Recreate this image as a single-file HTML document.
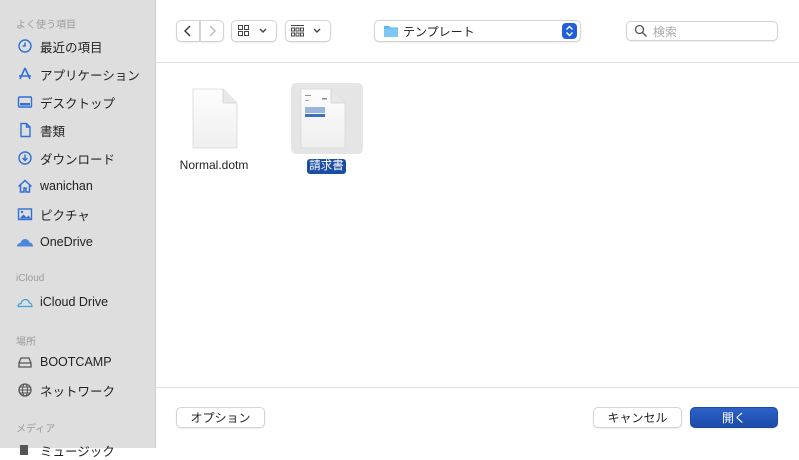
<!DOCTYPE html>
<html><head><meta charset="utf-8"><style>
*{margin:0;padding:0;box-sizing:border-box}
body{width:799px;height:448px;overflow:hidden;background:#fff;font-family:"Liberation Sans","Noto Sans CJK JP",sans-serif;position:relative}
.sb{position:absolute;left:0;top:0;width:156px;height:448px;background:#dedede;border-right:1px solid #cfcfcf}
.h{position:absolute;left:16px;font-size:10px;color:#9a9a9a}
.it{position:absolute;left:16px;font-size:12.5px;color:#222;display:flex;align-items:center;height:20px}
.it svg{width:18px;height:18px;margin-right:6px;flex:none}
.btn{position:absolute;background:#fff;border:1px solid #d4d4d4;border-radius:5px;box-shadow:0 0.5px 1px rgba(0,0,0,.12);font-size:12px;color:#222;display:flex;align-items:center;justify-content:center}
.line{position:absolute;left:156px;right:0;height:1px;background:#e3e3e3}
</style></head><body>
<div class="sb">
<div class="h" style="top:16px">よく使う項目</div>
<div class="it" style="top:36px"><svg viewBox="0 0 18 18"><circle cx="9" cy="9" r="6" fill="none" stroke="#2f6fd6" stroke-width="1.4"/><path d="M9 5.5V9H6.5" fill="none" stroke="#2f6fd6" stroke-width="1.4"/></svg>最近の項目</div>
<div class="it" style="top:64px"><svg viewBox="0 0 18 18"><path d="M9 3L4 14M9 3l5 11M3 11h12" fill="none" stroke="#2f6fd6" stroke-width="1.6"/></svg>アプリケーション</div>
<div class="it" style="top:92px"><svg viewBox="0 0 18 18"><rect x="2.5" y="4" width="13" height="10" rx="1" fill="none" stroke="#2f6fd6" stroke-width="1.4"/><rect x="4" y="10" width="10" height="2.5" fill="#2f6fd6"/></svg>デスクトップ</div>
<div class="it" style="top:120px"><svg viewBox="0 0 18 18"><path d="M5 2.5h5.5L14 6v9.5H5z M10.5 2.5V6H14" fill="none" stroke="#2f6fd6" stroke-width="1.4"/></svg>書類</div>
<div class="it" style="top:148px"><svg viewBox="0 0 18 18"><circle cx="9" cy="9" r="6" fill="none" stroke="#2f6fd6" stroke-width="1.4"/><path d="M9 5.5v6M6.5 9l2.5 2.5 2.5-2.5" fill="none" stroke="#2f6fd6" stroke-width="1.4"/></svg>ダウンロード</div>
<div class="it" style="top:176px"><svg viewBox="0 0 18 18"><path d="M2.5 9.5L9 3.5l6.5 6M4.5 8v7h3.5v-4h2v4h3.5V8" fill="none" stroke="#2f6fd6" stroke-width="1.5"/></svg>wanichan</div>
<div class="it" style="top:204px"><svg viewBox="0 0 18 18"><rect x="2.5" y="4" width="13" height="10.5" fill="none" stroke="#2f6fd6" stroke-width="1.4"/><path d="M3.5 13.5l4-4 3 3 2-2 2.5 3z" fill="#2f6fd6"/><circle cx="6" cy="7" r="1.2" fill="#2f6fd6"/></svg>ピクチャ</div>
<div class="it" style="top:232px"><svg viewBox="0 0 18 18"><path d="M1 13.5c0-2.5 2-3.5 3.5-3.5.5-2.5 2.5-4 4.5-4s4 1.5 4.5 3.5c2 0 3.5 1.5 3.5 4z" fill="#4a86d9"/></svg>OneDrive</div>
<div class="h" style="top:273px">iCloud</div>
<div class="it" style="top:292px"><svg viewBox="0 0 18 18"><path d="M2 13.5c0-2 1.5-3 3-3 .5-2.5 2.5-4 4.5-4s3.5 1.5 4 3.5c1.5 0 2.5 1.5 2.5 3.5z" fill="none" stroke="#3fa0e0" stroke-width="1.3"/></svg>iCloud Drive</div>
<div class="h" style="top:333px">場所</div>
<div class="it" style="top:352px"><svg viewBox="0 0 18 18"><path d="M3 10l2-5h8l2 5v4H3zM3 10h12" fill="none" stroke="#555" stroke-width="1.3"/></svg>BOOTCAMP</div>
<div class="it" style="top:380px"><svg viewBox="0 0 18 18"><circle cx="9" cy="9" r="6" fill="none" stroke="#555" stroke-width="1.3"/><ellipse cx="9" cy="9" rx="2.5" ry="6" fill="none" stroke="#555" stroke-width="1"/><path d="M3 9h12M4 6h10M4 12h10" stroke="#555" stroke-width="1"/></svg>ネットワーク</div>
<div class="h" style="top:420px">メディア</div>
<div class="it" style="top:440px"><svg viewBox="0 0 18 18"><rect x="4" y="4" width="8" height="10" fill="#555"/></svg>ミュージック</div>
</div>

<div class="btn" style="left:176px;top:20px;width:24px;height:22px;border-radius:5px 0 0 5px"><svg width="10" height="12"><path d="M7 1L2 6l5 5" fill="none" stroke="#333" stroke-width="1.4"/></svg></div>
<div class="btn" style="left:200px;top:20px;width:24px;height:22px;border-radius:0 5px 5px 0"><svg width="10" height="12"><path d="M3 1l5 5-5 5" fill="none" stroke="#bbb" stroke-width="1.4"/></svg></div>
<div class="btn" style="left:231px;top:20px;width:46px;height:22px"><svg width="36" height="14"><g fill="none" stroke="#444" stroke-width="1"><rect x="2.5" y="1.5" width="4" height="4"/><rect x="8.5" y="1.5" width="4" height="4"/><rect x="2.5" y="7.5" width="4" height="4"/><rect x="8.5" y="7.5" width="4" height="4"/><path d="M24 5l3 3 3-3" stroke-width="1.4"/></g></svg></div>
<div class="btn" style="left:285px;top:20px;width:46px;height:22px"><svg width="36" height="14"><g fill="none" stroke="#444" stroke-width="1"><path d="M1 1.5h13"/><rect x="1.5" y="4" width="3" height="3"/><rect x="6" y="4" width="3" height="3"/><rect x="10.5" y="4" width="3" height="3"/><rect x="1.5" y="9" width="3" height="3"/><rect x="6" y="9" width="3" height="3"/><rect x="10.5" y="9" width="3" height="3"/><path d="M24 5l3 3 3-3" stroke-width="1.4"/></g></svg></div>
<div class="btn" style="left:374px;top:20px;width:207px;height:22px;justify-content:flex-start;padding-left:8px"><svg width="16" height="14" style="margin-right:4px"><path d="M1 2h5l1.5 1.5H15V13H1z" fill="#5db4ef"/><path d="M1 4.5h14V13H1z" fill="#7cc7f5"/></svg>テンプレート<div style="position:absolute;right:3px;top:2px;width:15px;height:16px;background:#2160d6;border-radius:4px"><svg width="15" height="16"><path d="M4.5 6.5l3-3 3 3M4.5 9.5l3 3 3-3" fill="none" stroke="#fff" stroke-width="1.4"/></svg></div></div>
<div class="btn" style="left:626px;top:21px;width:152px;height:20px;justify-content:flex-start;padding-left:7px;color:#aaa"><svg width="14" height="14" style="margin-right:5px"><circle cx="5.5" cy="5.5" r="4" fill="none" stroke="#555" stroke-width="1.3"/><path d="M8.5 8.5l4 4" stroke="#555" stroke-width="1.4"/></svg>検索</div>

<div class="line" style="top:62px"></div>

<svg style="position:absolute;left:190px;top:88px" width="50" height="64"><defs><linearGradient id="g" x1="0" y1="0" x2="0" y2="1"><stop offset="0" stop-color="#fdfdfd"/><stop offset="1" stop-color="#efefef"/></linearGradient></defs><path d="M3 1h30l14 14v45H3z" fill="url(#g)" stroke="#d8d8d8" stroke-width=".8"/><path d="M33 1v14h14" fill="#e8e8e8" stroke="#d0d0d0" stroke-width=".8"/></svg>
<div style="position:absolute;left:170px;top:158px;width:88px;text-align:center;font-size:12px;color:#222">Normal.dotm</div>

<div style="position:absolute;left:291px;top:83px;width:72px;height:71px;background:#e5e5e5;border-radius:5px"></div>
<svg style="position:absolute;left:298px;top:88px" width="52" height="64"><path d="M3 1h30l14 14v45H3z" fill="url(#g)" stroke="#d8d8d8" stroke-width=".8"/><path d="M33 1v14h14" fill="#e8e8e8" stroke="#d0d0d0" stroke-width=".8"/><rect x="7" y="7" width="6" height="1" fill="#999"/><rect x="24" y="10" width="5" height="1.5" fill="#888"/><rect x="7" y="12" width="4" height="1" fill="#aaa"/><rect x="7" y="19" width="20" height="6" fill="#9bb4dc"/><rect x="7" y="26" width="20" height="3" fill="#3d6fc0"/></svg>
<div style="position:absolute;left:307px;top:159px;width:39px;height:15px;background:#1b4ea3;border-radius:3px;color:#fff;font-size:11.5px;text-align:center;line-height:15px">請求書</div>

<div class="line" style="top:387px"></div>
<div class="btn" style="left:176px;top:407px;width:89px;height:21px">オプション</div>
<div class="btn" style="left:593px;top:407px;width:89px;height:21px">キャンセル</div>
<div class="btn" style="left:690px;top:407px;width:88px;height:21px;background:linear-gradient(#2c61c9,#1c4ca9);border-color:#1b4aa5;color:#fff">開く</div>
</body></html>
